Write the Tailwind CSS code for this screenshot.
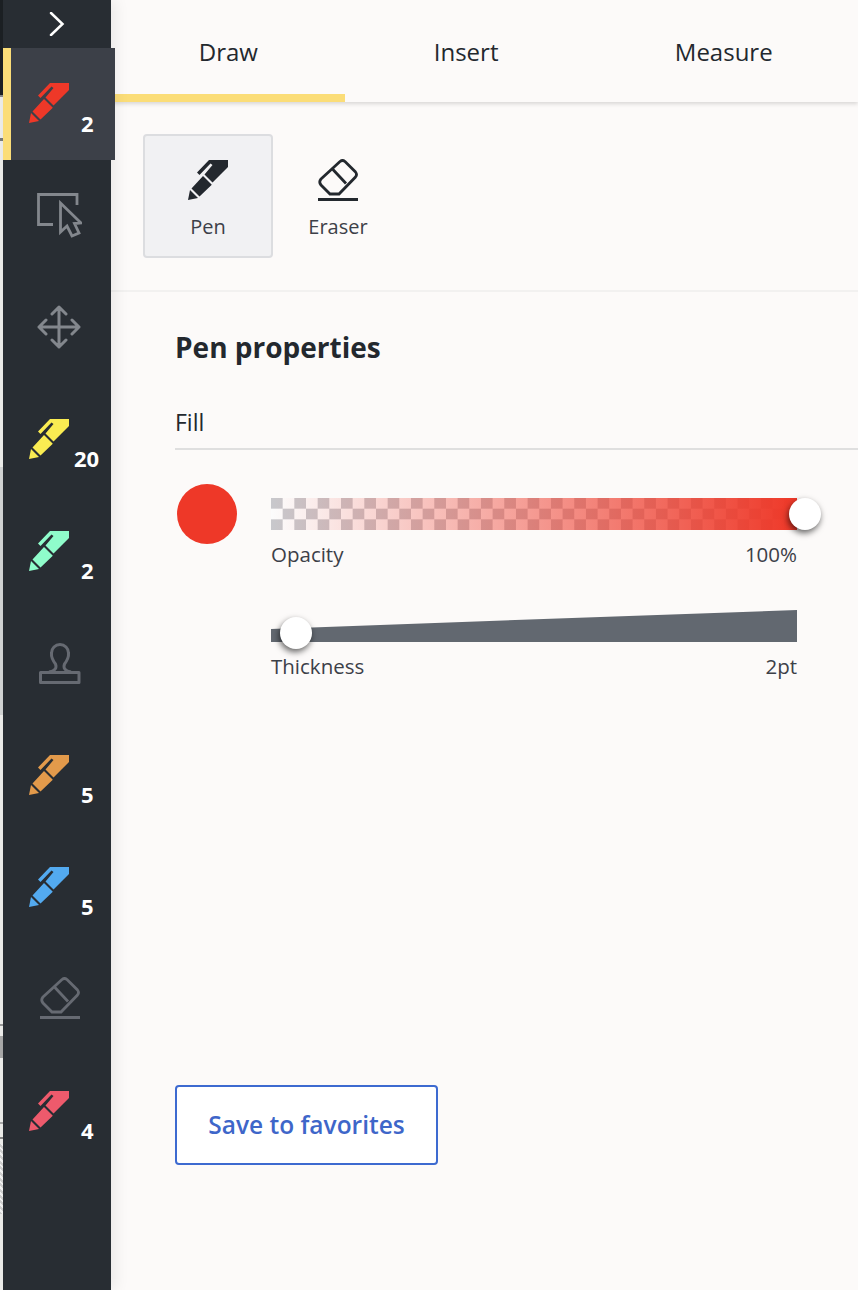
<!DOCTYPE html>
<html lang="en">
<head>
  <meta charset="UTF-8">
  <title>Draw</title>
  <script src="https://cdn.jsdelivr.net/npm/@tailwindcss/browser@4"></script>
</head>
<body class="h-[1290px] overflow-hidden bg-[#fcfaf9] font-['Open_Sans','Noto_Sans',sans-serif] text-[#23282e]">
  <svg width="0" height="0" class="absolute">
    <defs>
      <symbol id="pen" viewBox="0 0 40 40">
        <path d="M21 0H40V7L24.500 22.500L16.500 14.500L24.500 5L22.500 3.500L11.500 15L9 12.500Z M15 16L23.800 24.800L11.500 36.500L3.500 28.500Z M2 30L10 38L0 40Z"/>
      </symbol>
      <symbol id="eraser" viewBox="0 0 42 42">
        <path d="M1 40.500H41M15 9.500L29 24.500M4 20L23 2.500Q25.500 0.500 28 2.500L38.500 13Q40.500 15.500 38.500 18L22 35H13L4 26Q1.500 23 4 20Z" fill="none" stroke="currentColor" stroke-width="2.800"/>
      </symbol>
    </defs>
  </svg>

  <div class="flex h-full">
    <!-- sliver of the document behind the toolbar -->
    <div class="flex h-full w-[3px] shrink-0 flex-col bg-[#eeeeec]">
      <div class="h-[95px] bg-[#1c2024]"></div>
      <div class="h-[2px] bg-[#8a8a8a]"></div>
      <div class="mt-[41px] h-[3px] bg-[#77797a]"></div>
      <div class="mt-[326px] h-[248px] bg-[#d4d6d6]"></div>
      <div class="mt-[309px] h-[2px] bg-[#999]"></div>
      <div class="mt-[10px] h-[22px] bg-[#aaa]"></div>
      <div class="mt-[64px] h-[2px] bg-[#aaa]"></div>
      <div class="mt-[13px] h-[2px] bg-[#888]"></div>
      <div class="mt-[5px] h-[70px] bg-[repeating-linear-gradient(45deg,#d0d0d0_0_2px,#f4f4f4_2px_4px)]"></div>
    </div>

    <aside class="relative z-10 flex h-full w-[108px] shrink-0 flex-col bg-[#282d33] shadow-[4px_0_14px_rgba(0,0,0,0.08)]">
      <div class="flex h-12 items-center justify-center">
        <svg class="size-[24px] text-white" viewBox="0 0 24 24" fill="none" stroke="currentColor" stroke-width="2.500" stroke-linecap="round"><path d="M6 1L17.500 12L6 23"/></svg>
      </div>

      <div class="relative h-28 w-28 border-l-8 border-[#fbdd78] bg-[#3c4048]">
        <svg class="absolute left-[18px] top-[35px] size-10 fill-[#ee3828]"><use href="#pen"/></svg>
        <span class="absolute left-[70px] top-[63px] text-[22px] font-bold leading-6 text-white">2</span>
      </div>

      <div class="flex h-28 items-center justify-center pb-[2px] pl-[4px]">
        <svg class="size-[46px] text-[#83878d]" viewBox="0 0 46 46" fill="none" stroke="currentColor" stroke-width="2.800"><path d="M17 32.500H2.500V2.500H41V13M24.500 11V40L31 34L36 44L43 41L38.500 31.500L45 31Z"/></svg>
      </div>
      <div class="flex h-28 items-center justify-center pb-[3px] pl-[3px]">
        <svg class="size-11 text-[#83878d]" viewBox="0 0 44 44" fill="none" stroke="currentColor" stroke-width="3" stroke-linecap="round" stroke-linejoin="round"><path d="M22 2V42M2 22H42M15 9L22 2L29 9M15 35L22 42L29 35M9 15L2 22L9 29M35 15L42 22L35 29"/></svg>
      </div>

      <div class="relative h-28">
        <svg class="absolute left-[26px] top-[35px] size-10 fill-[#faec52]"><use href="#pen"/></svg>
        <span class="absolute left-[71px] top-[62px] text-[22px] font-bold leading-6 text-white">20</span>
      </div>
      <div class="relative h-28">
        <svg class="absolute left-[26px] top-[35px] size-10 fill-[#8ffccb]"><use href="#pen"/></svg>
        <span class="absolute left-[78px] top-[62px] text-[22px] font-bold leading-6 text-white">2</span>
      </div>
      <div class="flex h-28 items-center justify-center pb-[1px] pl-[5px]">
        <svg class="size-[42px] text-[#666a72]" viewBox="0 0 42 42" fill="none" stroke="currentColor" stroke-width="3" stroke-linejoin="round"><path d="M1.500 29.500H40V39.500H1.500ZM10 29C16 28 18 25 16.500 21Q12 15 12.500 10A8.500 8.500 0 0 1 29.500 10Q30 15 25.500 21C24 25 26 28 32 29"/></svg>
      </div>
      <div class="relative h-28">
        <svg class="absolute left-[26px] top-[35px] size-10 fill-[#e39a4b]"><use href="#pen"/></svg>
        <span class="absolute left-[78px] top-[62px] text-[22px] font-bold leading-6 text-white">5</span>
      </div>
      <div class="relative h-28">
        <svg class="absolute left-[26px] top-[35px] size-10 fill-[#53aaf0]"><use href="#pen"/></svg>
        <span class="absolute left-[78px] top-[62px] text-[22px] font-bold leading-6 text-white">5</span>
      </div>
      <div class="flex h-28 items-center justify-center pb-1 pl-[5px]">
        <svg class="size-[42px] text-[#666a72]"><use href="#eraser"/></svg>
      </div>
      <div class="relative h-28">
        <svg class="absolute left-[26px] top-[35px] size-10 fill-[#ee5a6c]"><use href="#pen"/></svg>
        <span class="absolute left-[78px] top-[62px] text-[22px] font-bold leading-6 text-white">4</span>
      </div>
    </aside>

    <main class="min-w-0 flex-1">
      <nav class="flex h-[102px] shadow-[0_2px_4px_rgba(0,0,0,0.14)]">
        <div class="flex w-[235px] items-start justify-center border-b-8 border-[#fbdd78] pl-[1px] pt-[36px] text-[24px] leading-8">Draw</div>
        <div class="flex w-[240px] items-start justify-center pl-[4px] pt-[36px] text-[24px] leading-8">Insert</div>
        <div class="flex w-[276px] items-start justify-center pl-[6px] pt-[36px] text-[24px] leading-8">Measure</div>
      </nav>

      <section class="flex border-b-2 border-[#f2f1f0] py-[32px] pl-[32px]">
        <div class="flex h-[124px] w-[130px] flex-col items-center rounded border-2 border-[#dcdde0] bg-[#f1f1f3] pt-[24px]">
          <svg class="size-10 fill-[#23282e]"><use href="#pen"/></svg>
          <span class="mt-[13px] text-xl leading-7 text-[#3c4048]">Pen</span>
        </div>
        <div class="flex h-[124px] w-[130px] flex-col items-center pt-[25px]">
          <svg class="size-[42px] text-[#23282e]"><use href="#eraser"/></svg>
          <span class="mt-[12px] text-xl leading-7 text-[#3c4048]">Eraser</span>
        </div>
      </section>

      <section class="pl-[64px] pt-[37px]">
        <h2 class="text-[28px] font-bold leading-9">Pen properties</h2>
        <div class="mt-[41px] border-b-2 border-[#dfdfdf] pb-[10px] text-[23px] leading-8">Fill</div>

        <div class="mt-[34px] flex">
          <div class="ml-[2px] size-[60px] shrink-0 rounded-full bg-[#ee3828]"></div>
          <div class="ml-[34px] w-[526px]">
            <div class="relative mt-[14px] h-8">
              <div class="h-full bg-[linear-gradient(to_right,transparent,#ee3828),repeating-conic-gradient(#fcfcfc_0_25%,#c8c8cc_0_50%)] bg-[size:100%_100%,23.33px_21.33px]"></div>
              <div class="absolute -right-6 top-0 size-8 rounded-full bg-white shadow-[-1px_3px_6px_rgba(0,0,0,0.6)]"></div>
            </div>
            <div class="mt-[10px] flex justify-between text-[20.5px] leading-7 text-[#3c4048]"><span>Opacity</span><span>100%</span></div>

            <div class="relative mt-[42px] h-8">
              <div class="h-full bg-[#626870] [clip-path:polygon(0_59%,100%_0,100%_100%,0_100%)]"></div>
              <div class="absolute left-[9px] top-[7px] size-8 rounded-full bg-white shadow-[-1px_3px_6px_rgba(0,0,0,0.6)]"></div>
            </div>
            <div class="mt-[10px] flex justify-between text-[20.5px] leading-7 text-[#3c4048]"><span>Thickness</span><span>2pt</span></div>
          </div>
        </div>

        <button class="mt-[405px] h-20 w-[263px] rounded border-2 border-[#3d6ad0] bg-white pt-[1px] text-[24.5px] font-semibold text-[#3e66c9]">Save to favorites</button>
      </section>
    </main>
  </div>
</body>
</html>
